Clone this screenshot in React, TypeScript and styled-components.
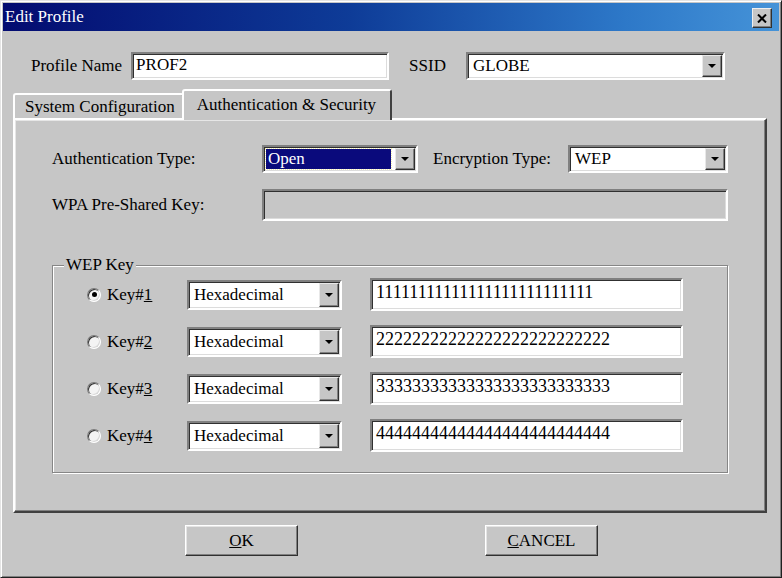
import React from 'react';
import styled, { createGlobalStyle } from 'styled-components';

const FACE = '#c6c6c6';

const GlobalStyle = createGlobalStyle`
    html, body {
        margin: 0;
        padding: 0;
        background: ${FACE};
    }
    body {
        font-family: "Liberation Serif", "Times New Roman", serif;
        font-size: 17px;
        color: #000;
    }
`;

const keys = [
    { n: '1', value: '11111111111111111111111111', checked: true },
    { n: '2', value: '22222222222222222222222222', checked: false },
    { n: '3', value: '33333333333333333333333333', checked: false },
    { n: '4', value: '44444444444444444444444444', checked: false },
];

export default function App() {
    return (
        <>
            <GlobalStyle />
            <Window>
                <TitleBar>
                    <TitleText>Edit Profile</TitleText>
                    <CloseButton>
                        <svg width="10" height="9" viewBox="0 0 10 9">
                            <path d="M1 0.5 L9 8.5 M9 0.5 L1 8.5" stroke="#000" strokeWidth="2" fill="none" />
                        </svg>
                    </CloseButton>
                </TitleBar>

                <Body>
                    <TopRow>
                        <span>Profile Name</span>
                        <TextField w={258} h={28} ml={9}>PROF2</TextField>
                        <Label ml={20}>SSID</Label>
                        <Combo w={259} h={28} ml={20} text={'GLOBE'} />
                    </TopRow>

                    <TabStrip>
                        <Tab>System Configuration</Tab>
                        <ActiveTab>Authentication &amp; Security</ActiveTab>
                    </TabStrip>
                    <Panel>
                        <FormRow h={28}>
                            <Label w={210}>Authentication Type:</Label>
                            <Combo w={156} h={28} text={'Open'} selected />
                            <Label w={135} ml={15}>Encryption Type:</Label>
                            <Combo w={160} h={28} text={'WEP'} />
                        </FormRow>
                        <FormRow h={32} mt={16}>
                            <Label w={210}>WPA Pre-Shared Key:</Label>
                            <TextField w={466} h={32} disabled />
                        </FormRow>

                        <GroupBox>
                            <Legend>WEP Key</Legend>
                            <KeyList>
                                {keys.map(k => (
                                    <KeyRow key={k.n}>
                                        <Radio checked={k.checked} />
                                        <KeyLabel>Key#<u>{k.n}</u></KeyLabel>
                                        <Combo w={155} h={30} text={'Hexadecimal'} />
                                        <TextField w={313} h={33} ml={28} big>{k.value}</TextField>
                                    </KeyRow>
                                ))}
                            </KeyList>
                        </GroupBox>
                    </Panel>

                    <ButtonRow>
                        <PushButton><u>O</u>K</PushButton>
                        <PushButton><u>C</u>ANCEL</PushButton>
                    </ButtonRow>
                </Body>
            </Window>
        </>
    );
}

interface ComboProps {
    w: number;
    h: number;
    ml?: number;
    text: string;
    selected?: boolean;
}
const Combo: React.FC<ComboProps> = ({ w, h, ml, text, selected }) => {
    return (
        <ComboBox w={w} h={h} ml={ml}>
            <ComboText selected={selected}>{text}</ComboText>
            <DropButton>
                <svg width="8" height="4" viewBox="0 0 8 4">
                    <polygon points="0,0 8,0 4,4" fill="#000" />
                </svg>
            </DropButton>
        </ComboBox>
    );
}

const Window = styled.div`
    width: 782px;
    height: 578px;
    box-sizing: border-box;
    background: ${FACE};
    border: 1px solid;
    border-color: #e4e4e4 #202020 #202020 #e4e4e4;
    box-shadow: inset 1px 1px 0 #fff, inset -1px -1px 0 #808080;
    padding: 2px;
    display: flex;
    flex-direction: column;
`;

const TitleBar = styled.div`
    height: 28px;
    display: flex;
    align-items: center;
    justify-content: space-between;
    padding-left: 2px;
    background: linear-gradient(90deg, #030b70 0%, #0e3c98 45%, #2d78c8 80%, #4593d8 100%);
    color: #fff;
`;

const TitleText = styled.span`
    line-height: 28px;
`;

const CloseButton = styled.span`
    width: 20px;
    height: 20px;
    box-sizing: border-box;
    margin: 2px 7px 0 0;
    display: flex;
    align-items: center;
    justify-content: center;
    background: ${FACE};
    border: 1px solid;
    border-color: #efefef #303030 #303030 #efefef;
    box-shadow: inset -1px -1px 0 #808080;
`;

const Body = styled.div`
    padding: 0 12px 0 10px;
    display: flex;
    flex-direction: column;
`;

const TopRow = styled.div`
    display: flex;
    align-items: center;
    height: 28px;
    margin-top: 21px;
    padding-left: 18px;
`;

const Label = styled.span<{ w?: number; ml?: number }>`
    ${p => p.w ? `width: ${p.w}px; flex: none;` : ''}
    margin-left: ${p => p.ml || 0}px;
    white-space: nowrap;
`;

const TextField = styled.div<{ w: number; h: number; ml?: number; disabled?: boolean; big?: boolean }>`
    width: ${p => p.w}px;
    height: ${p => p.h}px;
    margin-left: ${p => p.ml || 0}px;
    box-sizing: border-box;
    flex: none;
    background: ${p => p.disabled ? FACE : '#fff'};
    border: 2px solid;
    border-color: #808080 #fff #fff #808080;
    box-shadow: inset 1px 1px 0 #303030, inset -1px -1px 0 #dcdcdc;
    display: flex;
    align-items: center;
    padding: 0 0 ${p => p.big ? 4 : 2}px ${p => p.big ? 4 : 3}px;
    font-size: ${p => p.big ? 18 : 17}px;
    white-space: nowrap;
    overflow: hidden;
`;

const ComboBox = styled.div<{ w: number; h: number; ml?: number }>`
    width: ${p => p.w}px;
    height: ${p => p.h}px;
    margin-left: ${p => p.ml || 0}px;
    box-sizing: border-box;
    flex: none;
    background: #fff;
    border: 2px solid;
    border-color: #808080 #fff #fff #808080;
    box-shadow: inset 1px 1px 0 #303030, inset -1px -1px 0 #dcdcdc;
    display: flex;
    align-items: stretch;
    padding: 1px;
`;

const ComboText = styled.span<{ selected?: boolean }>`
    flex: 1;
    display: flex;
    align-items: center;
    padding-left: ${p => p.selected ? 2 : 4}px;
    margin: ${p => p.selected ? '1px 4px 1px 1px' : '0'};
    white-space: nowrap;
    overflow: hidden;
    background: ${p => p.selected ? '#0a0a7c' : 'transparent'};
    color: ${p => p.selected ? '#fff' : '#000'};
    outline: ${p => p.selected ? '1px dotted #f4f0b0' : 'none'};
`;

const DropButton = styled.span`
    width: 20px;
    flex: none;
    box-sizing: border-box;
    display: flex;
    align-items: center;
    justify-content: center;
    background: ${FACE};
    border: 1px solid;
    border-color: #e8e8e8 #303030 #303030 #e8e8e8;
    box-shadow: inset -1px -1px 0 #808080;
`;

const TabStrip = styled.div`
    display: flex;
    align-items: flex-end;
    height: 29px;
    margin-top: 9px;
`;

const Tab = styled.div`
    height: 25px;
    box-sizing: border-box;
    display: flex;
    align-items: center;
    padding: 0 7px 0 10px;
    margin-right: -2px;
    border: 2px solid;
    border-bottom: none;
    border-color: #fff #404040 transparent #fff;
    border-radius: 3px 3px 0 0;
    white-space: nowrap;
`;

const ActiveTab = styled.div`
    height: 31px;
    margin-bottom: -2px;
    position: relative;
    z-index: 1;
    box-sizing: border-box;
    display: flex;
    align-items: center;
    padding: 0 14px 2px 13px;
    background: ${FACE};
    border: 2px solid;
    border-bottom: none;
    border-color: #fff #404040 transparent #fff;
    border-radius: 3px 3px 0 0;
    white-space: nowrap;
`;

const Panel = styled.div`
    height: 395px;
    box-sizing: border-box;
    border: 2px solid;
    border-color: #fff #404040 #404040 #fff;
    box-shadow: inset -1px -1px 0 #808080, inset 1px 1px 0 #e6e6e6;
    padding: 25px 0 0 37px;
`;

const FormRow = styled.div<{ h: number; mt?: number }>`
    display: flex;
    align-items: center;
    height: ${p => p.h}px;
    margin-top: ${p => p.mt || 0}px;
`;

const GroupBox = styled.fieldset`
    width: 676px;
    box-sizing: border-box;
    margin: 34px 0 0 0;
    padding: 0;
    min-inline-size: 0;
    border: 1px solid #868686;
    box-shadow: inset 1px 1px 0 #fff, 1px 1px 0 #fff;
`;

const Legend = styled.legend`
    margin-left: 11px;
    padding: 0 2px;
    line-height: 20px;
    background: ${FACE};
`;

const KeyList = styled.div`
    display: flex;
    flex-direction: column;
    gap: 14px;
    padding: 3px 0 20px 34px;
`;

const KeyRow = styled.div`
    display: flex;
    align-items: center;
    height: 33px;
`;

const Radio = styled.span<{ checked?: boolean }>`
    width: 14px;
    height: 14px;
    flex: none;
    box-sizing: border-box;
    border-radius: 50%;
    background: #f4f4f4;
    border: 1px solid;
    border-color: #7a7a7a #fff #fff #7a7a7a;
    box-shadow: inset 1px 1px 0 #303030, inset -1px -1px 0 #d8d8d8;
    display: flex;
    align-items: center;
    justify-content: center;
    &::after {
        content: '';
        width: 5px;
        height: 5px;
        border-radius: 50%;
        background: #000;
        display: ${p => p.checked ? 'block' : 'none'};
    }
`;

const KeyLabel = styled.span`
    width: 80px;
    flex: none;
    margin-left: 6px;
`;

const ButtonRow = styled.div`
    display: flex;
    gap: 187px;
    margin-top: 12px;
    padding-left: 172px;
`;

const PushButton = styled.button`
    width: 113px;
    height: 31px;
    padding: 0;
    background: ${FACE};
    color: #000;
    font-family: inherit;
    font-size: 17px;
    border: 1px solid;
    border-color: #fff #303030 #303030 #fff;
    box-shadow: inset -1px -1px 0 #808080, inset 1px 1px 0 #e4e4e4;
`;
